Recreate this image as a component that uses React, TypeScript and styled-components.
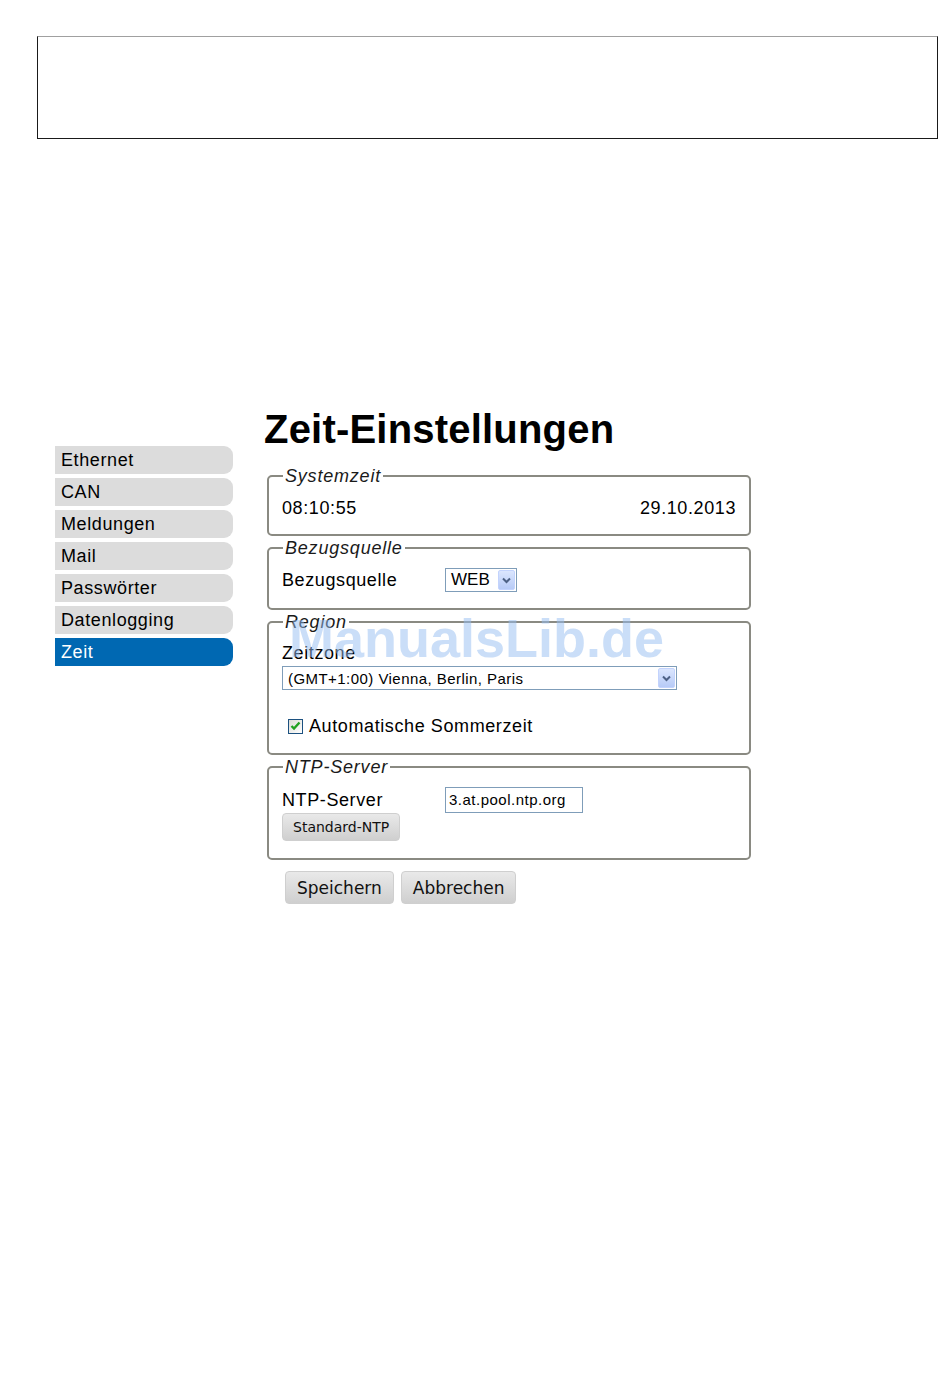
import styled, { createGlobalStyle } from 'styled-components';

const Global = createGlobalStyle`
    html, body {
        margin: 0;
        padding: 0;
        background: #ffffff;
    }
    body {
        font-family: 'Liberation Sans', Arial, sans-serif;
        color: #000000;
        letter-spacing: 0.6px;
    }
`;

const Page = styled.div`
    position: relative;
    width: 950px;
    height: 1387px;
    padding-top: 36px;
    box-sizing: border-box;
`;

const HeaderBox = styled.div`
    margin-left: 37px;
    width: 901px;
    height: 103px;
    box-sizing: border-box;
    border: 1px solid #1a1a1a;
    border-top-color: #a0a0a0;
`;

const Main = styled.div`
    display: flex;
    margin-top: 266px;
`;

const Menu = styled.nav`
    display: flex;
    flex-direction: column;
    gap: 4px;
    width: 178px;
    margin: 41px 0 0 55px;
`;

const MenuItem = styled.div<{ $active?: boolean }>`
    height: 28px;
    line-height: 29px;
    padding-left: 6px;
    font-size: 18px;
    border-radius: 0 9px 9px 0;
    background: ${(p) => (p.$active ? '#0068b2' : '#dcdcdc')};
    color: ${(p) => (p.$active ? '#ffffff' : '#000000')};
`;

const Content = styled.div`
    margin-left: 31px;
    width: 487px;
`;

const Title = styled.h1`
    margin: 0 0 13px;
    font-size: 40px;
    line-height: 48px;
    font-weight: 700;
    letter-spacing: 0.2px;
`;

const Fieldset = styled.fieldset<{ $pad: string }>`
    margin: 0 0 2px 3px;
    padding: ${(p) => p.$pad};
    border: 2px solid #8a8a82;
    border-radius: 5px;
    min-width: 0;
`;

const Legend = styled.legend`
    margin-left: 1px;
    padding: 0 2px;
    font-size: 18px;
    line-height: 20px;
    font-style: italic;
    letter-spacing: 0.8px;
    color: #1a1a1a;
`;

const Row = styled.div`
    display: flex;
    align-items: center;
    justify-content: space-between;
    font-size: 18px;
    line-height: 24px;
`;

const FieldRow = styled.div<{ $h: number }>`
    display: flex;
    align-items: center;
    font-size: 18px;
    height: ${(p) => p.$h}px;
`;

const Label = styled.span`
    width: 163px;
    font-size: 18px;
`;

const SelectBox = styled.div<{ $width: number; $font: number; $spacing: number }>`
    display: flex;
    align-items: center;
    justify-content: space-between;
    width: ${(p) => p.$width}px;
    height: 24px;
    box-sizing: border-box;
    border: 1px solid #7f9db9;
    background: #ffffff;
    padding: 0 1px 0 5px;
    font-size: ${(p) => p.$font}px;
    letter-spacing: ${(p) => p.$spacing}px;
`;

const ArrowButton = styled.span`
    display: flex;
    align-items: center;
    justify-content: center;
    width: 17px;
    height: 20px;
    box-sizing: border-box;
    border: 1px solid #c3d3fd;
    border-radius: 2px;
    background: linear-gradient(#dbe6fe, #b7cbf7);
`;

const Chevron = () => (
    <svg width="9" height="7" viewBox="0 0 9 7">
        <path d="M1 1.5 L4.5 5 L8 1.5" stroke="#4d6185" strokeWidth="2" fill="none" />
    </svg>
);

const ZoneLabel = styled.div`
    font-size: 18px;
    line-height: 24px;
    margin: 9px 0 1px;
`;

const CheckRow = styled.label`
    display: flex;
    align-items: center;
    gap: 6px;
    margin: 25px 0 0 6px;
    font-size: 18px;
    line-height: 22px;
`;

const CheckBox = styled.span`
    display: flex;
    align-items: center;
    justify-content: center;
    width: 15px;
    height: 15px;
    box-sizing: border-box;
    border: 1px solid #1c5180;
    background: linear-gradient(135deg, #dcdcd6, #ffffff);
`;

const TextInput = styled.div`
    width: 138px;
    height: 26px;
    box-sizing: border-box;
    border: 1px solid #7f9db9;
    padding: 0 3px;
    font-size: 15px;
    letter-spacing: 0.5px;
    line-height: 24px;
`;

const Button = styled.button<{ $small?: boolean }>`
    display: block;
    font-family: 'DejaVu Sans', Verdana, sans-serif;
    font-size: ${(p) => (p.$small ? '14px' : '17px')};
    letter-spacing: 0;
    height: ${(p) => (p.$small ? '28px' : '33px')};
    padding: ${(p) => (p.$small ? '0 10px' : '0 11px')};
    margin: 0;
    color: #111111;
    border: 1px solid #cfcfcf;
    border-radius: 4px;
    background: linear-gradient(#e9e9e9, #cfcfcf);
`;

const Actions = styled.div`
    display: flex;
    gap: 7px;
    margin: 11px 0 0 21px;
`;

const Watermark = styled.div`
    position: absolute;
    left: 289px;
    top: 606px;
    font-size: 54px;
    line-height: 64px;
    font-weight: 700;
    letter-spacing: 0;
    color: rgba(150, 190, 242, 0.5);
    pointer-events: none;
`;

const menu = ['Ethernet', 'CAN', 'Meldungen', 'Mail', 'Passwörter', 'Datenlogging', 'Zeit'];

const App = () => {
    return (
        <>
            <Global />
            <Page>
                <HeaderBox />
                <Main>
                    <Menu>
                        {menu.map((m) => (
                            <MenuItem key={m} $active={m === 'Zeit'}>
                                {m}
                            </MenuItem>
                        ))}
                    </Menu>
                    <Content>
                        <Title>Zeit-Einstellungen</Title>
                        <Fieldset $pad="10px 13px 14px">
                            <Legend>Systemzeit</Legend>
                            <Row>
                                <span>08:10:55</span>
                                <span>29.10.2013</span>
                            </Row>
                        </Fieldset>
                        <Fieldset $pad="10px 13px 16px">
                            <Legend>Bezugsquelle</Legend>
                            <FieldRow $h={24}>
                                <Label>Bezugsquelle</Label>
                                <SelectBox $width={72} $font={17} $spacing={0}>
                                    WEB
                                    <ArrowButton>
                                        <Chevron />
                                    </ArrowButton>
                                </SelectBox>
                            </FieldRow>
                        </Fieldset>
                        <Fieldset $pad="0 13px 16px">
                            <Legend>Region</Legend>
                            <ZoneLabel>Zeitzone</ZoneLabel>
                            <SelectBox $width={395} $font={15} $spacing={0.45}>
                                (GMT+1:00) Vienna, Berlin, Paris
                                <ArrowButton>
                                    <Chevron />
                                </ArrowButton>
                            </SelectBox>
                            <CheckRow>
                                <CheckBox>
                                    <svg width="11" height="10" viewBox="0 0 11 10">
                                        <path d="M1.5 5 L4 7.5 L9.5 1.5" stroke="#21a121" strokeWidth="2.4" fill="none" />
                                    </svg>
                                </CheckBox>
                                Automatische Sommerzeit
                            </CheckRow>
                        </Fieldset>
                        <Fieldset $pad="10px 13px 17px">
                            <Legend>NTP-Server</Legend>
                            <FieldRow $h={26}>
                                <Label>NTP-Server</Label>
                                <TextInput>3.at.pool.ntp.org</TextInput>
                            </FieldRow>
                            <Button $small>Standard-NTP</Button>
                        </Fieldset>
                        <Actions>
                            <Button>Speichern</Button>
                            <Button>Abbrechen</Button>
                        </Actions>
                    </Content>
                </Main>
                <Watermark>ManualsLib.de</Watermark>
            </Page>
        </>
    );
};
export default App;
